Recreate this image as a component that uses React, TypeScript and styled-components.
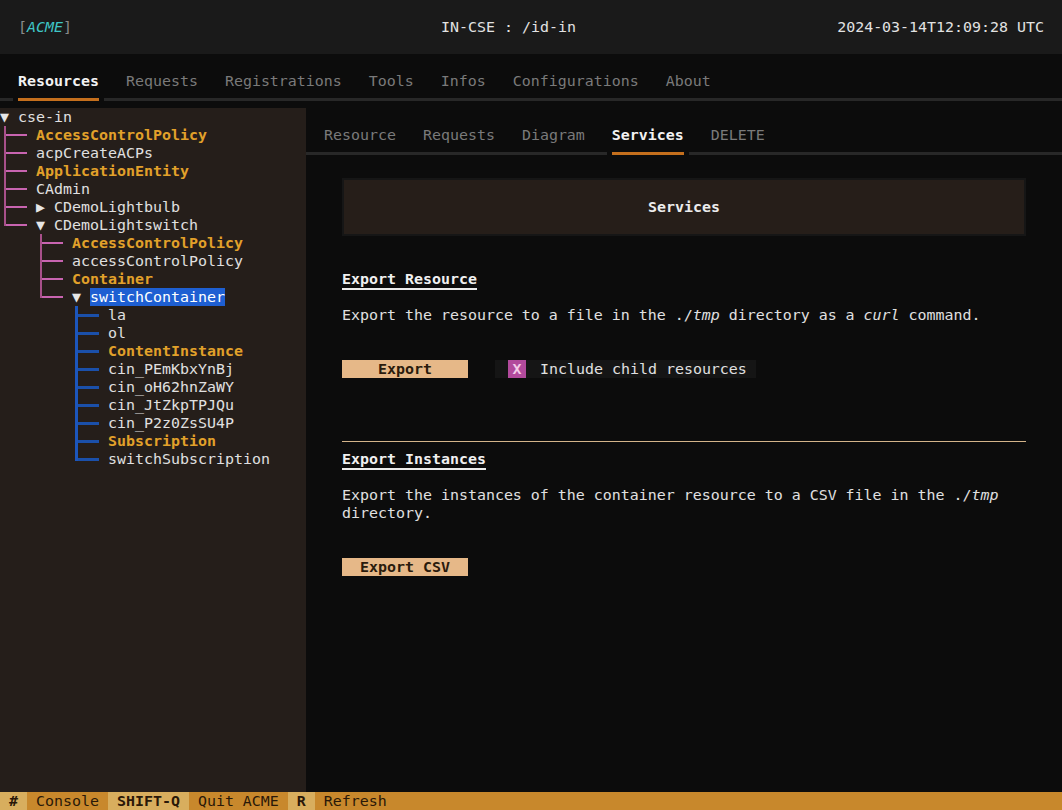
import React from 'react';
import styled, { createGlobalStyle, css } from 'styled-components';

const GlobalStyle = createGlobalStyle`
  html, body { margin: 0; padding: 0; background: #0c0c0c; }
  body {
    font-family: "DejaVu Sans Mono", "Liberation Mono", monospace;
    font-size: 14.95px;
    line-height: 18px;
    color: #e0e0e0;
  }
  * { box-sizing: border-box; }
`;

const Screen = styled.div`
  width: 1062px;
  height: 810px;
  display: flex;
  flex-direction: column;
  overflow: hidden;
  background: #0c0c0c;
`;

const Header = styled.header`
  flex: none;
  height: 54px;
  background: #1a1a1a;
  display: grid;
  grid-template-columns: 423px 1fr auto;
  align-items: center;
  padding: 0 18px;
  white-space: pre;
  color: #e2e2e2;
`;

const Bracket = styled.span`
  color: #8a8a8a;
`;

const Brand = styled.span`
  color: #3fc6c6;
  font-style: italic;
`;

const TabBar = styled.nav`
  flex: none;
  display: flex;
  gap: 9px;
  padding: 18px 9px 0;
  height: 54px;
  background: linear-gradient(#282828, #282828) no-repeat 0 44px / 100% 3px;
`;

const Tab = styled.span<{ $active?: boolean }>`
  display: block;
  height: 36px;
  padding: 0 9px;
  color: #7a7a7a;
  white-space: pre;
  ${(p) =>
    p.$active &&
    css`
      color: #f2f2f2;
      font-weight: bold;
      background:
        linear-gradient(#c46f1d, #c46f1d) no-repeat 9px 26px / calc(100% - 18px) 3px,
        linear-gradient(#0c0c0c, #0c0c0c) no-repeat 4px 26px / calc(100% - 8px) 3px;
    `}
`;

const Body = styled.div`
  flex: 1;
  display: flex;
  min-height: 0;
`;

const TreePanel = styled.aside`
  flex: none;
  width: 306px;
  background: #251e1a;
  overflow: hidden;
`;

const TreeRow = styled.div`
  display: flex;
  height: 18px;
  white-space: pre;
`;

type GuideKind = 'branch' | 'last' | 'pipe' | 'blank';

interface GuideSpec {
  kind: GuideKind;
  tone: 'pink' | 'blue';
}

const tones = {
  pink: { v: '#a8508a', h: '#c864b0', w: 2, vx: 4, hy: 8 },
  blue: { v: '#1c56bc', h: '#1b50aa', w: 3, vx: 3, hy: 8 },
};

const guideBg = (g: GuideSpec) => {
  if (g.kind === 'blank') return 'none';
  const t = tones[g.tone];
  const vert = (h: string) => `linear-gradient(${t.v}, ${t.v}) no-repeat ${t.vx}px 0 / ${t.w}px ${h}`;
  const horiz = `linear-gradient(${t.h}, ${t.h}) no-repeat ${t.vx}px ${t.hy}px / ${27 - t.vx}px ${t.w}px`;
  if (g.kind === 'pipe') return vert('100%');
  if (g.kind === 'branch') return `${vert('100%')}, ${horiz}`;
  return `${vert(`${t.hy + t.w}px`)}, ${horiz}`;
};

const Guide = styled.span<{ $spec: GuideSpec }>`
  flex: none;
  width: 36px;
  height: 18px;
  background: ${(p) => guideBg(p.$spec)};
`;

const Toggle = styled.span`
  flex: none;
  color: #e6e6e6;
`;

type LabelKind = 'plain' | 'type' | 'selected';

const NodeLabel = styled.span<{ $kind: LabelKind }>`
  color: #e0e0e0;
  ${(p) =>
    p.$kind === 'type' &&
    css`
      color: #e2a12a;
      font-weight: bold;
    `}
  ${(p) =>
    p.$kind === 'selected' &&
    css`
      color: #ffffff;
      background: #1e5fd2;
    `}
`;

const Detail = styled.main`
  flex: 1;
  min-width: 0;
  display: flex;
  flex-direction: column;
`;

const Content = styled.div`
  display: flex;
  flex-direction: column;
  align-items: flex-start;
  padding: 16px 36px 0;
`;

const Banner = styled.div`
  width: 684px;
  height: 58px;
  border: 2px solid #161616;
  background: #261e19;
  display: flex;
  align-items: center;
  justify-content: center;
  font-weight: bold;
  color: #ececec;
  margin-bottom: 34px;
`;

const SectionTitle = styled.div`
  height: 20px;
  border-bottom: 2px solid #ececec;
  font-weight: bold;
  color: #f0f0f0;
  white-space: pre;
`;

const Description = styled.p`
  margin: 16px 0 0;
  width: 684px;
  color: #e0e0e0;
`;

const Actions = styled.div`
  display: flex;
  align-items: center;
  margin-top: 36px;
`;

const Button = styled.button`
  width: 126px;
  height: 18px;
  padding: 0;
  border: none;
  background: #e6b888;
  color: #2a1b0d;
  font: inherit;
  font-weight: bold;
  text-align: center;
`;

const Checkbox = styled.label`
  display: flex;
  align-items: center;
  height: 18px;
  margin-left: 27px;
  padding: 0 9px 0 13px;
  background: #151515;
  color: #e0e0e0;
  white-space: pre;
`;

const CheckMark = styled.span`
  width: 18px;
  height: 18px;
  margin-right: 14px;
  background: #b24a9c;
  color: #f4cbe8;
  font-weight: bold;
  text-align: center;
`;

const Rule = styled.hr`
  width: 684px;
  height: 18px;
  margin: 54px 0 0;
  border: none;
  background: linear-gradient(#d4b48a, #d4b48a) no-repeat 0 9px / 100% 1px;
`;

const Footer = styled.footer`
  flex: none;
  height: 18px;
  display: flex;
  background: #c8882c;
  color: #2a1808;
  white-space: pre;
`;

const FooterKey = styled.span`
  padding: 0 9px;
  background: #d8ae5e;
  font-weight: bold;
`;

const FooterDesc = styled.span`
  padding: 0 9px;
`;

interface Node {
  guides: GuideSpec[];
  toggle?: string;
  label: string;
  kind?: LabelKind;
}

const P = (kind: GuideKind): GuideSpec => ({ kind, tone: 'pink' });
const B = (kind: GuideKind): GuideSpec => ({ kind, tone: 'blue' });
const _ = P('blank');

const tree: Node[] = [
  { guides: [], toggle: '▼ ', label: 'cse-in' },
  { guides: [P('branch')], label: 'AccessControlPolicy', kind: 'type' },
  { guides: [P('branch')], label: 'acpCreateACPs' },
  { guides: [P('branch')], label: 'ApplicationEntity', kind: 'type' },
  { guides: [P('branch')], label: 'CAdmin' },
  { guides: [P('branch')], toggle: '▶ ', label: 'CDemoLightbulb' },
  { guides: [P('last')], toggle: '▼ ', label: 'CDemoLightswitch' },
  { guides: [_, P('branch')], label: 'AccessControlPolicy', kind: 'type' },
  { guides: [_, P('branch')], label: 'accessControlPolicy' },
  { guides: [_, P('branch')], label: 'Container', kind: 'type' },
  { guides: [_, P('last')], toggle: '▼ ', label: 'switchContainer', kind: 'selected' },
  { guides: [_, _, B('branch')], label: 'la' },
  { guides: [_, _, B('branch')], label: 'ol' },
  { guides: [_, _, B('branch')], label: 'ContentInstance', kind: 'type' },
  { guides: [_, _, B('branch')], label: 'cin_PEmKbxYnBj' },
  { guides: [_, _, B('branch')], label: 'cin_oH62hnZaWY' },
  { guides: [_, _, B('branch')], label: 'cin_JtZkpTPJQu' },
  { guides: [_, _, B('branch')], label: 'cin_P2z0ZsSU4P' },
  { guides: [_, _, B('branch')], label: 'Subscription', kind: 'type' },
  { guides: [_, _, B('last')], label: 'switchSubscription' },
];

const mainTabs = ['Resources', 'Requests', 'Registrations', 'Tools', 'Infos', 'Configurations', 'About'];
const detailTabs = ['Resource', 'Requests', 'Diagram', 'Services', 'DELETE'];

const footerItems: [string, string][] = [
  ['#', 'Console'],
  ['SHIFT-Q', 'Quit ACME'],
  ['R', 'Refresh'],
];

export default function App() {
  return (
    <>
      <GlobalStyle />
      <Screen>
        <Header>
          <span>
            <Bracket>[</Bracket>
            <Brand>ACME</Brand>
            <Bracket>]</Bracket>
          </span>
          <span>IN-CSE : /id-in</span>
          <span>2024-03-14T12:09:28 UTC</span>
        </Header>
        <TabBar>
          {mainTabs.map((t) => (
            <Tab key={t} $active={t === 'Resources'}>
              {t}
            </Tab>
          ))}
        </TabBar>
        <Body>
          <TreePanel>
            {tree.map((n, i) => (
              <TreeRow key={i}>
                {n.guides.map((g, j) => (
                  <Guide key={j} $spec={g} />
                ))}
                {n.toggle && <Toggle>{n.toggle}</Toggle>}
                <NodeLabel $kind={n.kind ?? 'plain'}>{n.label}</NodeLabel>
              </TreeRow>
            ))}
          </TreePanel>
          <Detail>
            <TabBar>
              {detailTabs.map((t) => (
                <Tab key={t} $active={t === 'Services'}>
                  {t}
                </Tab>
              ))}
            </TabBar>
            <Content>
              <Banner>Services</Banner>
              <SectionTitle>Export Resource</SectionTitle>
              <Description>
                Export the resource to a file in the ./<i>tmp</i> directory as a <i>curl</i> command.
              </Description>
              <Actions>
                <Button>Export</Button>
                <Checkbox>
                  <CheckMark>X</CheckMark>
                  Include child resources
                </Checkbox>
              </Actions>
              <Rule />
              <SectionTitle>Export Instances</SectionTitle>
              <Description>
                Export the instances of the container resource to a CSV file in the ./<i>tmp</i> directory.
              </Description>
              <Actions>
                <Button>Export CSV</Button>
              </Actions>
            </Content>
          </Detail>
        </Body>
        <Footer>
          {footerItems.map(([k, d]) => (
            <React.Fragment key={k}>
              <FooterKey>{k}</FooterKey>
              <FooterDesc>{d}</FooterDesc>
            </React.Fragment>
          ))}
        </Footer>
      </Screen>
    </>
  );
}
